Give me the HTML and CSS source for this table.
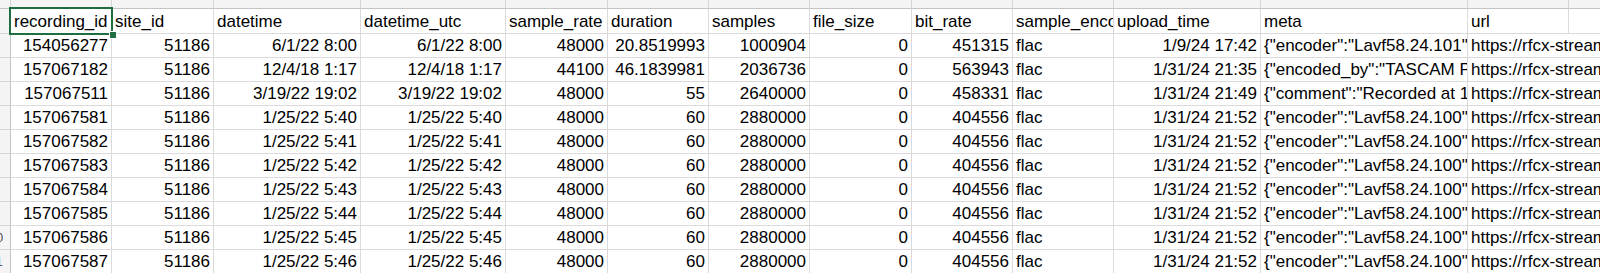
FILE: index.html
```html
<!DOCTYPE html>
<html>
<head>
<meta charset="utf-8">
<link rel="stylesheet" href="styles.css">
</head>
<body>
<div class="sheet">
  <div class="band corner"></div>
  <div class="band"></div><div class="band"></div><div class="band"></div><div class="band"></div><div class="band"></div><div class="band"></div><div class="band"></div><div class="band"></div><div class="band"></div><div class="band"></div><div class="band"></div><div class="band"></div><div class="band"></div><div class="band last"></div>

  <div class="rh"><span>1</span></div>
  <div class="c hd">recording_id</div><div class="c hd">site_id</div><div class="c hd">datetime</div><div class="c hd">datetime_utc</div><div class="c hd">sample_rate</div><div class="c hd">duration</div><div class="c hd">samples</div><div class="c hd">file_size</div><div class="c hd">bit_rate</div><div class="c hd">sample_encoding</div><div class="c hd">upload_time</div><div class="c hd">meta</div><div class="c hd">url</div><div class="c hd last"></div>

  <div class="rh"><span>2</span></div>
  <div class="c n">154056277</div><div class="c n">51186</div><div class="c n">6/1/22 8:00</div><div class="c n">6/1/22 8:00</div><div class="c n">48000</div><div class="c n">20.8519993</div><div class="c n">1000904</div><div class="c n">0</div><div class="c n">451315</div><div class="c t">flac</div><div class="c n">1/9/24 17:42</div><div class="c t">{"encoder":"Lavf58.24.101"}</div><div class="c t url">https://rfcx-streams-production.s3.amazonaws.com/</div>

  <div class="rh"><span>3</span></div>
  <div class="c n">157067182</div><div class="c n">51186</div><div class="c n">12/4/18 1:17</div><div class="c n">12/4/18 1:17</div><div class="c n">44100</div><div class="c n">46.1839981</div><div class="c n">2036736</div><div class="c n">0</div><div class="c n">563943</div><div class="c t">flac</div><div class="c n">1/31/24 21:35</div><div class="c t">{"encoded_by":"TASCAM PCM Recorder"}</div><div class="c t url">https://rfcx-streams-production.s3.amazonaws.com/</div>

  <div class="rh"><span>4</span></div>
  <div class="c n">157067511</div><div class="c n">51186</div><div class="c n">3/19/22 19:02</div><div class="c n">3/19/22 19:02</div><div class="c n">48000</div><div class="c n">55</div><div class="c n">2640000</div><div class="c n">0</div><div class="c n">458331</div><div class="c t">flac</div><div class="c n">1/31/24 21:49</div><div class="c t">{"comment":"Recorded at 19:02"}</div><div class="c t url">https://rfcx-streams-production.s3.amazonaws.com/</div>

  <div class="rh"><span>5</span></div>
  <div class="c n">157067581</div><div class="c n">51186</div><div class="c n">1/25/22 5:40</div><div class="c n">1/25/22 5:40</div><div class="c n">48000</div><div class="c n">60</div><div class="c n">2880000</div><div class="c n">0</div><div class="c n">404556</div><div class="c t">flac</div><div class="c n">1/31/24 21:52</div><div class="c t">{"encoder":"Lavf58.24.100"}</div><div class="c t url">https://rfcx-streams-production.s3.amazonaws.com/</div>

  <div class="rh"><span>6</span></div>
  <div class="c n">157067582</div><div class="c n">51186</div><div class="c n">1/25/22 5:41</div><div class="c n">1/25/22 5:41</div><div class="c n">48000</div><div class="c n">60</div><div class="c n">2880000</div><div class="c n">0</div><div class="c n">404556</div><div class="c t">flac</div><div class="c n">1/31/24 21:52</div><div class="c t">{"encoder":"Lavf58.24.100"}</div><div class="c t url">https://rfcx-streams-production.s3.amazonaws.com/</div>

  <div class="rh"><span>7</span></div>
  <div class="c n">157067583</div><div class="c n">51186</div><div class="c n">1/25/22 5:42</div><div class="c n">1/25/22 5:42</div><div class="c n">48000</div><div class="c n">60</div><div class="c n">2880000</div><div class="c n">0</div><div class="c n">404556</div><div class="c t">flac</div><div class="c n">1/31/24 21:52</div><div class="c t">{"encoder":"Lavf58.24.100"}</div><div class="c t url">https://rfcx-streams-production.s3.amazonaws.com/</div>

  <div class="rh"><span>8</span></div>
  <div class="c n">157067584</div><div class="c n">51186</div><div class="c n">1/25/22 5:43</div><div class="c n">1/25/22 5:43</div><div class="c n">48000</div><div class="c n">60</div><div class="c n">2880000</div><div class="c n">0</div><div class="c n">404556</div><div class="c t">flac</div><div class="c n">1/31/24 21:52</div><div class="c t">{"encoder":"Lavf58.24.100"}</div><div class="c t url">https://rfcx-streams-production.s3.amazonaws.com/</div>

  <div class="rh"><span>9</span></div>
  <div class="c n">157067585</div><div class="c n">51186</div><div class="c n">1/25/22 5:44</div><div class="c n">1/25/22 5:44</div><div class="c n">48000</div><div class="c n">60</div><div class="c n">2880000</div><div class="c n">0</div><div class="c n">404556</div><div class="c t">flac</div><div class="c n">1/31/24 21:52</div><div class="c t">{"encoder":"Lavf58.24.100"}</div><div class="c t url">https://rfcx-streams-production.s3.amazonaws.com/</div>

  <div class="rh"><span>10</span></div>
  <div class="c n">157067586</div><div class="c n">51186</div><div class="c n">1/25/22 5:45</div><div class="c n">1/25/22 5:45</div><div class="c n">48000</div><div class="c n">60</div><div class="c n">2880000</div><div class="c n">0</div><div class="c n">404556</div><div class="c t">flac</div><div class="c n">1/31/24 21:52</div><div class="c t">{"encoder":"Lavf58.24.100"}</div><div class="c t url">https://rfcx-streams-production.s3.amazonaws.com/</div>

  <div class="rh"><span>11</span></div>
  <div class="c n">157067587</div><div class="c n">51186</div><div class="c n">1/25/22 5:46</div><div class="c n">1/25/22 5:46</div><div class="c n">48000</div><div class="c n">60</div><div class="c n">2880000</div><div class="c n">0</div><div class="c n">404556</div><div class="c t">flac</div><div class="c n">1/31/24 21:52</div><div class="c t">{"encoder":"Lavf58.24.100"}</div><div class="c t url">https://rfcx-streams-production.s3.amazonaws.com/</div>

  <div class="selection"><div class="handle"></div></div>
</div>
</body>
</html>
```

FILE: styles.css
```css
* { box-sizing: border-box; }
html, body {
  margin: 0;
  padding: 0;
  background: #ffffff;
  overflow: hidden;
  width: 1600px;
  height: 273px;
}
.sheet {
  position: relative;
  display: grid;
  grid-template-columns: 11px 101px 102px 147px 145px 102px 101px 101px 102px 101px 101px 147px 207px 101px 1fr;
  grid-template-rows: 9px 25px repeat(10, 24px);
  width: 1600px;
  font-family: "Liberation Sans", Arial, sans-serif;
  font-size: 17px;
  color: #000000;
}
.band {
  background: #f4f4f4;
  border-right: 1px solid #d6d6d6;
  border-bottom: 1px solid #c4c4c4;
}
.band.last, .c.last { border-right: none; }
.rh {
  background: #f4f4f4;
  border-right: 1px solid #c4c4c4;
  border-bottom: 1px solid #d6d6d6;
  overflow: hidden;
  position: relative;
  font-size: 13px;
  color: #555555;
  display: flex;
  align-items: center;
}
.rh span {
  flex: none;
  width: 30px;
  margin-left: -19px;
  text-align: center;
}
.c {
  border-right: 1px solid #dadada;
  border-bottom: 1px solid #dadada;
  white-space: nowrap;
  overflow: hidden;
  padding: 0 3px;
  line-height: 23px;
  display: flex;
  align-items: flex-end;
}
.c.hd { line-height: 22px; }
.c.n { justify-content: flex-end; }
.c.t { justify-content: flex-start; }
.c.url { grid-column: span 2; border-right: none; }
.selection {
  position: absolute;
  left: 9px;
  top: 7px;
  width: 104px;
  height: 28px;
  border: 2px solid #1e6e42;
}
.handle {
  position: absolute;
  right: -6px;
  bottom: -6px;
  width: 8px;
  height: 8px;
  background: #1e6e42;
  border: 1px solid #ffffff;
}
```
